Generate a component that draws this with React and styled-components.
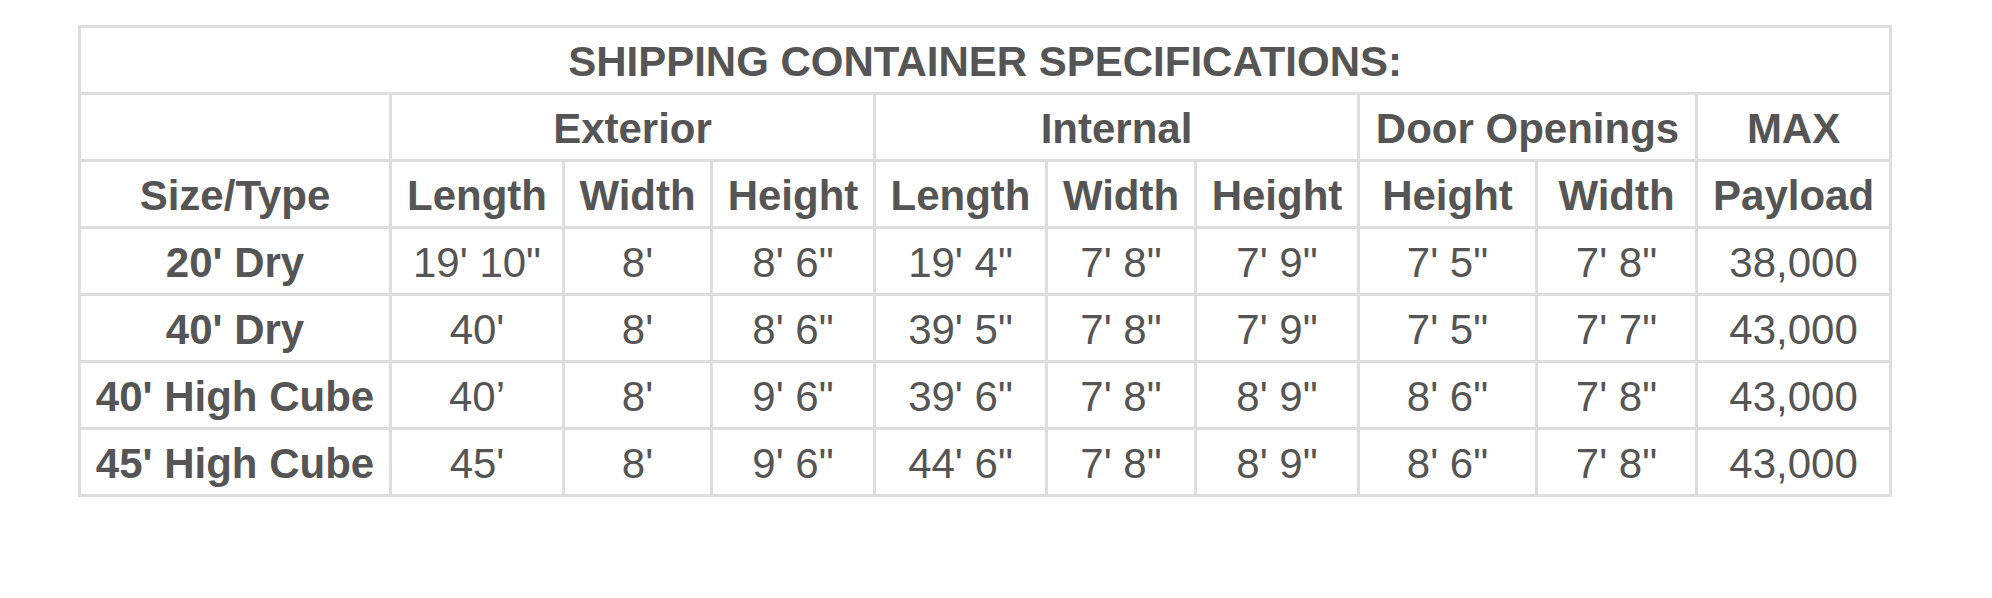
import React from 'react';
import styled, { createGlobalStyle } from 'styled-components';

const GlobalStyle = createGlobalStyle`
  html, body {
    margin: 0;
    padding: 0;
    background: #ffffff;
  }
  body {
    font-family: "Liberation Sans", Arial, sans-serif;
    color: #555555;
  }
`;

const Page = styled.div`
  padding: 25px 0 0 78px;
`;

const SpecTable = styled.table`
  border-collapse: collapse;
  table-layout: fixed;
  width: 1814px;
  font-size: 42px;
  color: #555555;
`;

const Row = styled.tr`
  height: 67px;
`;

const Cell = styled.td`
  border: 3px solid #dddddd;
  padding: 3px 0 0;
  text-align: center;
  vertical-align: middle;
  white-space: nowrap;
  line-height: 1;
  font-weight: ${(p) => (p.$bold ? 700 : 400)};
`;

const colWidths = [311, 173, 148, 163, 172, 149, 163, 178, 160, 194];

const rows = [
  ["20' Dry", "19' 10\"", "8'", "8' 6\"", "19' 4\"", "7' 8\"", "7' 9\"", "7' 5\"", "7' 8\"", '38,000'],
  ["40' Dry", "40'", "8'", "8' 6\"", "39' 5\"", "7' 8\"", "7' 9\"", "7' 5\"", "7' 7\"", '43,000'],
  ["40' High Cube", '40\u2019', "8'", "9' 6\"", "39' 6\"", "7' 8\"", "8' 9\"", "8' 6\"", "7' 8\"", '43,000'],
  ["45' High Cube", "45'", "8'", "9' 6\"", "44' 6\"", "7' 8\"", "8' 9\"", "8' 6\"", "7' 8\"", '43,000'],
];

const subHeads = ['Size/Type', 'Length', 'Width', 'Height', 'Length', 'Width', 'Height', 'Height', 'Width', 'Payload'];

export default function App() {
  return (
    <>
      <GlobalStyle />
      <Page>
        <SpecTable>
          <colgroup>
            {colWidths.map((w, i) => (
              <col key={i} style={{ width: w }} />
            ))}
          </colgroup>
          <tbody>
            <Row>
              <Cell $bold colSpan={10}>SHIPPING CONTAINER SPECIFICATIONS:</Cell>
            </Row>
            <Row>
              <Cell $bold></Cell>
              <Cell $bold colSpan={3}>Exterior</Cell>
              <Cell $bold colSpan={3}>Internal</Cell>
              <Cell $bold colSpan={2}>Door Openings</Cell>
              <Cell $bold>MAX</Cell>
            </Row>
            <Row>
              {subHeads.map((h, i) => (
                <Cell $bold key={i}>{h}</Cell>
              ))}
            </Row>
            {rows.map((r, i) => (
              <Row key={i}>
                {r.map((v, j) => (
                  <Cell $bold={j === 0} key={j}>{v}</Cell>
                ))}
              </Row>
            ))}
          </tbody>
        </SpecTable>
      </Page>
    </>
  );
}
